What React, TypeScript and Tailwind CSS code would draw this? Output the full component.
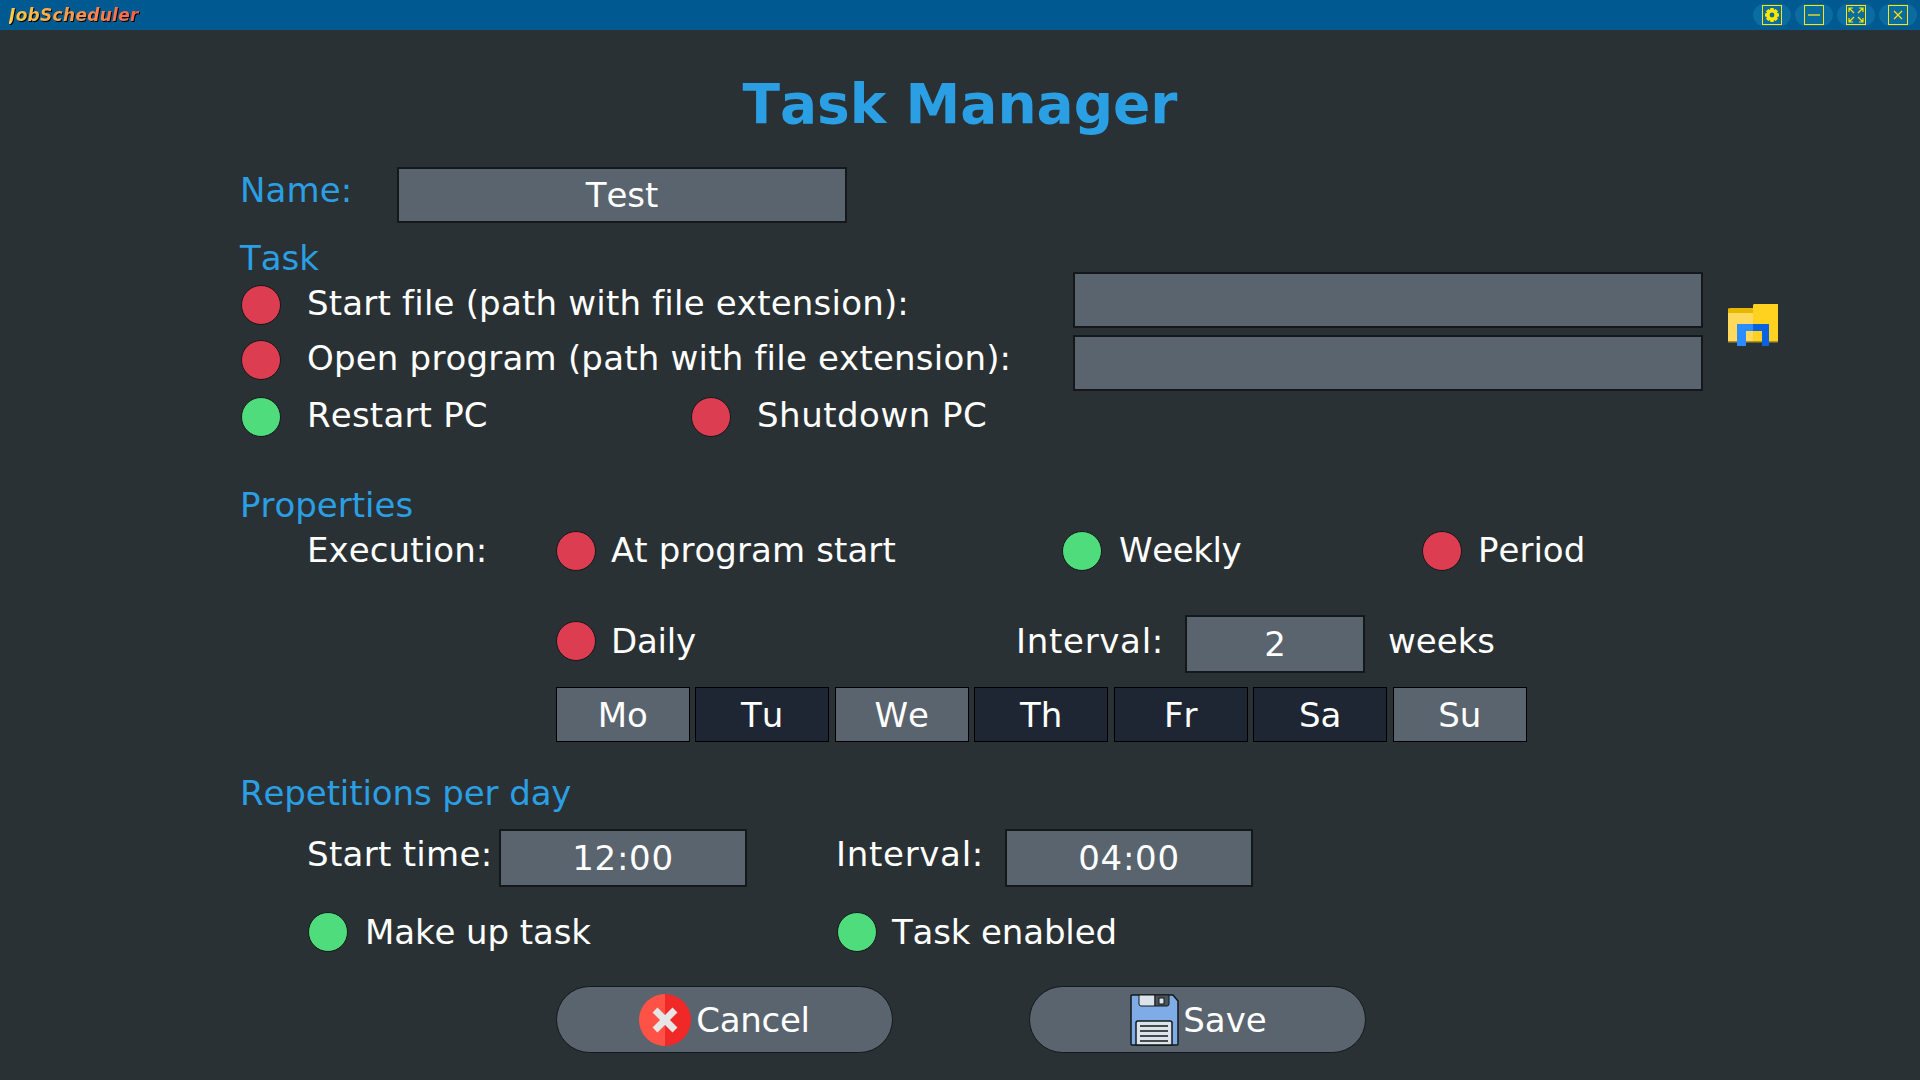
const font = "font-['DejaVu_Sans',sans-serif] [font-kerning:none]";

const Radio = ({ on }: { on?: boolean }) => (
  <span
    className={`block w-[40px] h-[40px] shrink-0 rounded-full border border-[#14181a] ${
      on ? "bg-[#4fdc7c]" : "bg-[#dc3d51]"
    }`}
  />
);

const Option = ({ on, label, gap, width, text }: { on?: boolean; label: string; gap: string; width?: string; text?: string }) => (
  <div className={`flex items-center h-[40px] ${gap} ${width ?? ""}`}>
    <Radio on={on} />
    <span className={`whitespace-nowrap ${text ?? "pb-[2px]"}`}>{label}</span>
  </div>
);

const Field = ({ children, className }: { children?: React.ReactNode; className: string }) => (
  <div
    className={`flex items-center justify-center bg-[#5a646e] border-2 border-[#14181a] ${className}`}
  >
    {children}
  </div>
);

const Heading = ({ children, className }: { children: React.ReactNode; className: string }) => (
  <div className={`h-[40px] flex items-center text-[#2a9fe4] ${className}`}>{children}</div>
);

const WinButton = ({ children }: { children: React.ReactNode }) => (
  <div className="w-[38px] h-[22px] rounded-full bg-[#0a6c9f] flex items-center justify-center">
    <div className="w-[20px] h-[20px] border border-[#ffe600] flex items-center justify-center">{children}</div>
  </div>
);

const Gear = () => (
  <svg width="16" height="16" viewBox="0 0 16 16">
    <path
      fill="#ffe600"
      fillRule="evenodd"
      d="M6.4 1h3.2l.4 2 1.7-1 2.3 2.3-1 1.7 2 .4v3.2l-2 .4 1 1.7-2.3 2.3-1.7-1-.4 2H6.4l-.4-2-1.7 1L2 11.7l1-1.7-2-.4V6.4l2-.4-1-1.7L4.3 2l1.7 1zM8 5.6a2.4 2.4 0 1 0 0 4.8 2.4 2.4 0 0 0 0-4.8z"
    />
  </svg>
);

const Folder = () => (
  <svg width="50" height="42" viewBox="0 0 50 42">
    <path d="M0 7 3 4h22v34H0z" fill="#ffd95c" />
    <path d="M0 4.5 3 4h22v5H0z" fill="#e6b800" />
    <path d="M25 1l1-1h24v38H25z" fill="#ffd21f" />
    <rect x="0" y="37" width="50" height="1.5" fill="#a8922e" />
    <path d="M9 20h16v7h-7v15H9z" fill="#2a8cff" />
    <path d="M25 20h16v22h-7V27h-9z" fill="#0a62e0" />
  </svg>
);

const CancelIcon = () => (
  <svg width="52" height="52" viewBox="0 0 52 52" className="shrink-0">
    <path d="M26 0a26 26 0 0 0 0 52z" fill="#ff5247" />
    <path d="M26 0a26 26 0 0 1 0 52z" fill="#f02828" />
    <path d="M16 16l20 20M36 16L16 36" stroke="#e6e6e6" strokeWidth="7" />
  </svg>
);

const SaveIcon = () => (
  <svg width="49" height="52" viewBox="0 0 49 52" className="shrink-0">
    <path d="M2 1h41l5 6v43a1 1 0 0 1-1 1H2a1 1 0 0 1-1-1V2a1 1 0 0 1 1-1z" fill="#7fabe6" stroke="#14181a" strokeWidth="1.5" />
    <path d="M9 1h16v11H11a2 2 0 0 1-2-2z" fill="#dbe4ea" stroke="#14181a" />
    <path d="M25 1h14v9a2 2 0 0 1-2 2H25z" fill="#4a545c" stroke="#14181a" />
    <rect x="29" y="4" width="5" height="6" fill="#dbe4ea" stroke="#14181a" />
    <path d="M6 51V29a2 2 0 0 1 2-2h32a2 2 0 0 1 2 2v22z" fill="#dbe4ea" stroke="#14181a" strokeWidth="1.5" />
    <path d="M10 32h28M10 37h28M10 42h28M10 47h28" stroke="#14181a" strokeWidth="1.5" />
  </svg>
);

const days = [
  { label: "Mo", active: true },
  { label: "Tu", active: false },
  { label: "We", active: true },
  { label: "Th", active: false },
  { label: "Fr", active: false },
  { label: "Sa", active: false },
  { label: "Su", active: true },
];

export default function App() {
  return (
    <div className={`h-screen w-screen overflow-hidden flex flex-col bg-[#2a3134] text-[34px] leading-none text-white ${font}`}>
      <header className="h-[30px] shrink-0 flex items-center justify-between bg-[#005a92] pl-[9px] pr-[3px]">
        <div className="drop-shadow-[1.5px_1px_0_#000]">
          <span className="block text-[17px] tracking-[0.3px] font-bold italic bg-linear-to-r from-[#ffcb45] to-[#ff5a4a] bg-clip-text text-transparent">
            JobScheduler
          </span>
        </div>
        <div className="flex gap-[4px]">
          <WinButton>
            <Gear />
          </WinButton>
          <WinButton>
            <div className="w-[12px] h-[2px] bg-[#a8b84a]" />
          </WinButton>
          <WinButton>
            <svg width="16" height="16" viewBox="0 0 16 16" fill="none" stroke="#ffe600" strokeWidth="1.2">
              <path d="M1 5V1h4M1 1l5 5M11 1h4v4M15 1l-5 5M1 11v4h4M1 15l5-5M11 15h4v-4M15 15l-5-5" />
            </svg>
          </WinButton>
          <WinButton>
            <svg width="12" height="12" viewBox="0 0 12 12" stroke="#ffe600" strokeWidth="1.2">
              <path d="M2 2l8 8M10 2l-8 8" />
            </svg>
          </WinButton>
        </div>
      </header>

      <main className="flex-1 flex flex-col">
        <h1 className="h-[137px] pt-[12px] flex items-center justify-center text-[55px] font-bold text-[#2a9fe4]">
          Task Manager
        </h1>

        <div className="pl-[240px] flex flex-col">
          <div className="flex h-[55px]">
            <div className="w-[157px] h-[46px] flex items-center text-[#2a9fe4] tracking-[0.1px]">Name:</div>
            <Field className="w-[450px] h-[56px]">Test</Field>
          </div>

          <div className="flex">
            <div className="w-[834px] flex flex-col">
              <Heading className="mt-[16px]">Task</Heading>
              <div className="mt-[7px] pl-[1px] flex flex-col">
                <div className="flex items-center h-[39px] gap-[26px]">
                  <Radio />
                  <span className="tracking-[0.2px] pb-[4px]">Start file (path with file extension):</span>
                </div>
                <div className="mt-[16px] flex items-center h-[39px] gap-[26px]">
                  <Radio />
                  <span className="tracking-[0.2px] pb-[3px]">Open program (path with file extension):</span>
                </div>
                <div className="mt-[18px] flex items-center h-[39px]">
                  <Option on label="Restart PC" gap="gap-[26px]" width="w-[450px]" text="pb-[3px] tracking-[0.2px]" />
                  <Option label="Shutdown PC" gap="gap-[26px]" text="pb-[3px] tracking-[0.5px]" />
                </div>
              </div>
            </div>
            <div className="pt-[50px] flex items-start -ml-[1px]">
              <div className="flex flex-col gap-[7px]">
                <Field className="w-[630px] h-[56px]" />
                <Field className="w-[630px] h-[56px]" />
              </div>
              <div className="ml-[25px] mt-[32px]">
                <Folder />
              </div>
            </div>
          </div>

          <Heading className="mt-[49px]">Properties</Heading>
          <div className="mt-[6px] flex items-center h-[40px]">
            <div className="ml-[67px] w-[249px] pb-[2px] tracking-[0.1px]">Execution:</div>
            <Option label="At program start" gap="gap-[15px] [&>span]:tracking-[0.1px]" width="w-[506px]" />
            <Option on label="Weekly" gap="gap-[17px] [&>span]:tracking-[-0.4px]" width="w-[360px]" />
            <Option label="Period" gap="gap-[16px]" />
          </div>

          <div className="mt-[44px] flex items-center h-[58px] pl-[316px]">
            <Option label="Daily" gap="gap-[15px] [&>span]:tracking-[-0.2px]" width="w-[460px] pb-[6px]" text="pb-[0px]" />
            <div className="w-[169px] pb-[6px] tracking-[0.7px]">Interval:</div>
            <Field className="w-[180px] h-[58px]">2</Field>
            <span className="ml-[23px] pb-[6px]">weeks</span>
          </div>

          <div className="mt-[14px] ml-[315.75px] flex gap-[5.5px]">
            {days.map((d) => (
              <div
                key={d.label}
                className={`w-[134px] h-[55px] flex items-center justify-center border-[1.5px] border-black ${
                  d.active ? "bg-[#5a646e]" : "bg-[#1d2632]"
                }`}
              >
                {d.label}
              </div>
            ))}
          </div>

          <Heading className="mt-[31px] tracking-[-0.1px]">Repetitions per day</Heading>
          <div className="mt-[16px] flex items-center h-[58px] pl-[67px]">
            <div className="w-[192px] pb-[9px] tracking-[0.3px]">Start time:</div>
            <Field className="w-[248px] h-[58px] tracking-[0.7px]">12:00</Field>
            <div className="ml-[89px] w-[169px] pb-[9px] tracking-[0.7px]">Interval:</div>
            <Field className="w-[248px] h-[58px] tracking-[0.7px]">04:00</Field>
          </div>

          <div className="mt-[25px] flex items-center h-[40px] pl-[68px]">
            <Option on label="Make up task" gap="gap-[17px] [&>span]:tracking-[-0.1px]" width="w-[529px]" text="pb-[0px]" />
            <Option on label="Task enabled" gap="gap-[15px] [&>span]:tracking-[-0.15px]" text="pb-[0px]" />
          </div>

          <div className="mt-[34px] ml-[316px] flex gap-[136px]">
            <button className="w-[337px] h-[67px] rounded-full bg-[#5a646e] border border-[#14181a] flex items-center justify-center gap-[5px]">
              <CancelIcon />
              <span className="tracking-[-0.3px]">Cancel</span>
            </button>
            <button className="w-[337px] h-[67px] rounded-full bg-[#5a646e] border border-[#14181a] flex items-center justify-center gap-[4px] pl-[2px]">
              <SaveIcon />
              <span>Save</span>
            </button>
          </div>
        </div>
      </main>
    </div>
  );
}
